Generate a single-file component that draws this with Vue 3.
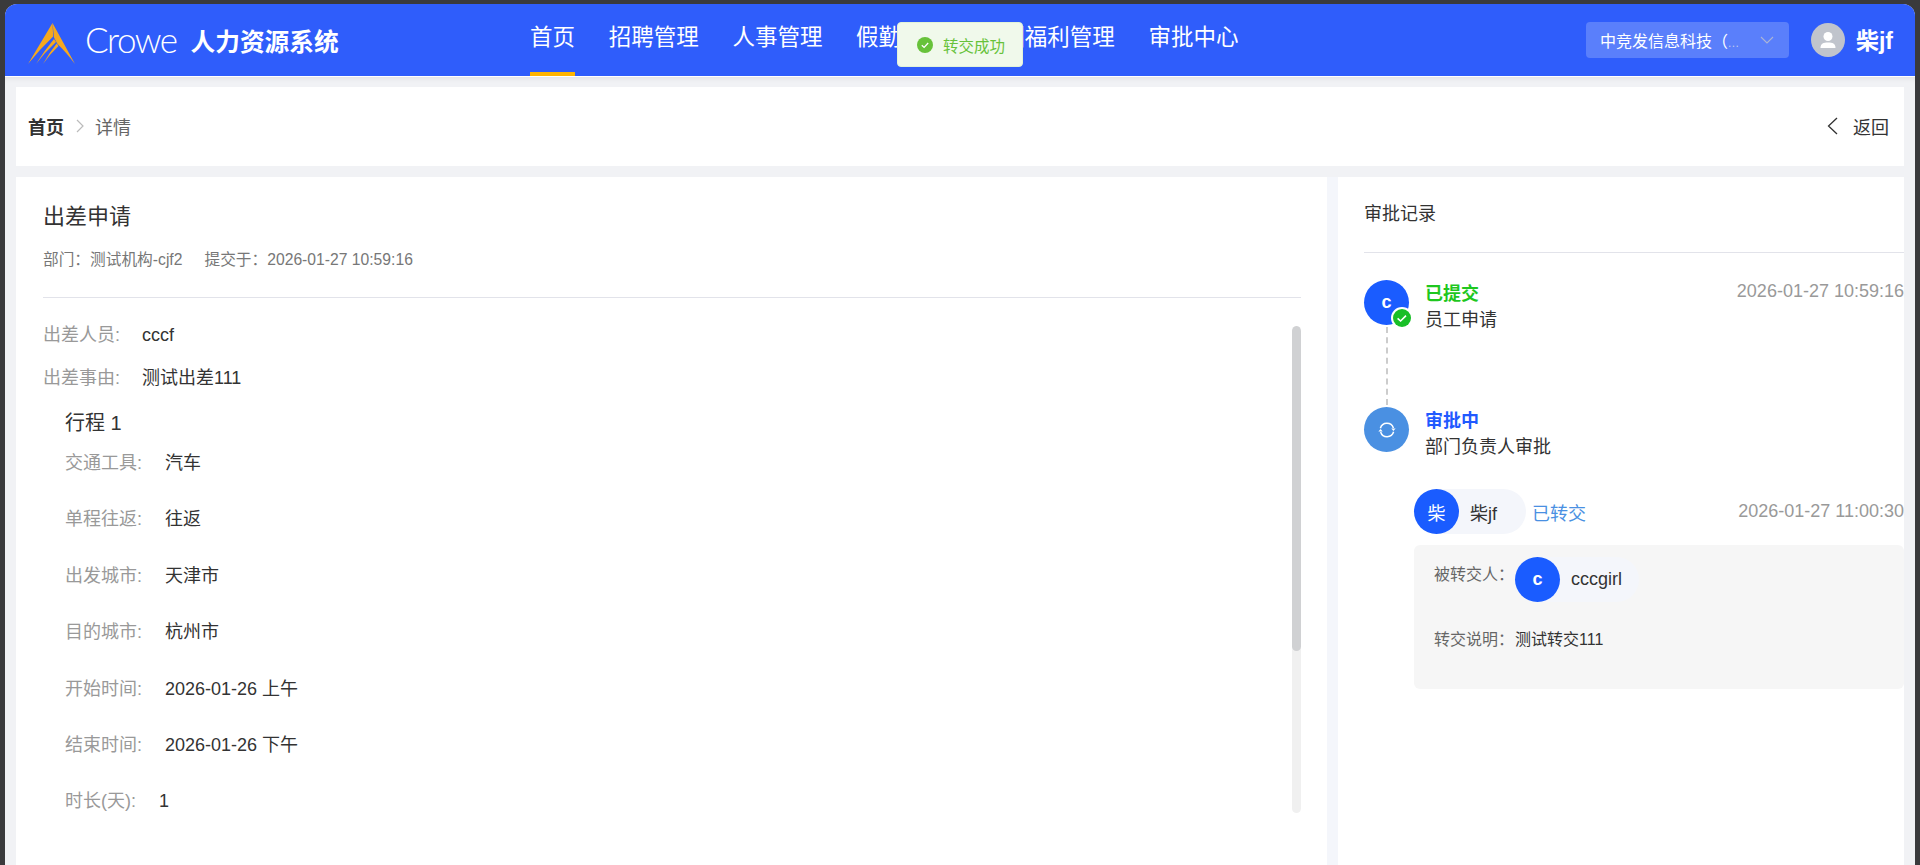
<script setup>
const navItems = ['首页', '招聘管理', '人事管理', '假勤管理', '薪酬福利管理', '审批中心']
const topRows = [
  { label: '出差人员:', value: 'cccf' },
  { label: '出差事由:', value: '测试出差111' }
]
const tripRows = [
  { label: '交通工具:', value: '汽车' },
  { label: '单程往返:', value: '往返' },
  { label: '出发城市:', value: '天津市' },
  { label: '目的城市:', value: '杭州市' },
  { label: '开始时间:', value: '2026-01-26 上午' },
  { label: '结束时间:', value: '2026-01-26 下午' },
  { label: '时长(天):', value: '1', narrow: true }
]
</script>

<template>
  <div class="window">
    <header class="topbar">
      <div class="brand">
        <svg class="logo" viewBox="0 0 47 41" width="47" height="41" aria-hidden="true">
          <path d="M24.5 0 L47 41 Q38 29 29.5 21 L26 14.5 Z" fill="#f5a81f" />
          <path d="M24.5 0 L25.2 13.5 Q12 26 0 41 Z" fill="#f5a81f" />
          <path d="M26 16 L28 19 Q17 29 8 41 Q16 28 26 16 Z" fill="#f5a81f" />
          <path d="M28.7 20.5 L30.5 23 Q22 31 15 41 Q21 30 28.7 20.5 Z" fill="#f5a81f" />
        </svg>
        <span class="crowe">Crowe</span>
        <span class="system">人力资源系统</span>
      </div>
      <nav class="nav">
        <a v-for="(item, i) in navItems" :key="item" class="nav-item" :class="{ active: i === 0 }">{{ item }}</a>
      </nav>
      <div class="top-right">
        <div class="company">
          <span class="company-name">中竞发信息科技（<i class="company-more">...</i></span>
          <svg class="company-arrow" viewBox="0 0 14 8" width="14" height="8" aria-hidden="true">
            <path d="M1 1 L7 7 L13 1" fill="none" stroke="#aab4d6" stroke-width="1.1" />
          </svg>
        </div>
        <div class="user-avatar">
          <svg viewBox="0 0 34 34" width="34" height="34" aria-hidden="true">
            <circle cx="17" cy="13.5" r="4.5" fill="#fff" />
            <path d="M9.5 25 C9.5 20.5 12.5 19.5 17 19.5 C21.5 19.5 24.5 20.5 24.5 25 Z" fill="#fff" />
          </svg>
        </div>
        <span class="user-name">柴jf</span>
      </div>
    </header>

    <div class="toast">
      <svg viewBox="0 0 16 16" width="16" height="16" aria-hidden="true">
        <circle cx="8" cy="8" r="8" fill="#67c23a" />
        <path d="M4.8 8.2 L7.1 10.4 L11.2 6" fill="none" stroke="#fff" stroke-width="1.3" />
      </svg>
      <span>转交成功</span>
    </div>

    <main class="content">
      <div class="crumbs">
        <div class="crumb-path">
          <b class="crumb-home">首页</b>
          <svg viewBox="0 0 8 14" width="8" height="14" aria-hidden="true">
            <path d="M1 1 L7 7 L1 13" fill="none" stroke="#bbbbbb" stroke-width="1.2" />
          </svg>
          <span class="crumb-current">详情</span>
        </div>
        <div class="back">
          <svg viewBox="0 0 11 18" width="11" height="18" aria-hidden="true">
            <path d="M10 1 L1.5 9 L10 17" fill="none" stroke="#333" stroke-width="1.3" />
          </svg>
          <span>返回</span>
        </div>
      </div>

      <div class="panels">
        <section class="detail">
          <h1 class="detail-title">出差申请</h1>
          <div class="meta">
            <span>部门：测试机构-cjf2</span>
            <span>提交于：2026-01-27 10:59:16</span>
          </div>
          <div class="detail-body">
            <div v-for="row in topRows" :key="row.label" class="top-row">
              <span class="label">{{ row.label }}</span>
              <span class="value">{{ row.value }}</span>
            </div>
            <div class="trip">
              <div class="trip-title">行程 1</div>
              <div class="trip-rows">
                <div v-for="row in tripRows" :key="row.label" class="trip-row" :class="{ narrow: row.narrow }">
                  <span class="label">{{ row.label }}</span>
                  <span class="value">{{ row.value }}</span>
                </div>
              </div>
            </div>
            <div class="scroll-track"><div class="scroll-thumb"></div></div>
          </div>
        </section>

        <aside class="records">
          <div class="records-title">审批记录</div>
          <div class="steps">
            <div class="step">
              <div class="step-icon avatar">
                c
                <span class="badge">
                  <svg viewBox="0 0 18 18" width="18" height="18" aria-hidden="true">
                    <circle cx="9" cy="9" r="9" fill="#19bf27" />
                    <path d="M4.6 9.3 L7.6 12 L13 6.6" fill="none" stroke="#fff" stroke-width="1.6" />
                  </svg>
                </span>
              </div>
              <div class="step-text">
                <div class="step-head">
                  <b class="status done">已提交</b>
                  <span class="time">2026-01-27 10:59:16</span>
                </div>
                <div class="step-name">员工申请</div>
              </div>
            </div>
            <div class="connector"></div>
            <div class="step">
              <div class="step-icon sync">
                <svg viewBox="0 0 20 20" width="20" height="20" aria-hidden="true">
                  <path d="M3.4 8.2 A6.8 6.8 0 0 1 16.4 8" fill="none" stroke="#fff" stroke-width="1.5" />
                  <path d="M16.6 11.8 A6.8 6.8 0 0 1 3.6 12" fill="none" stroke="#fff" stroke-width="1.5" />
                  <path d="M14.3 8.6 L18.6 8.6 L16.4 11 Z" fill="#fff" />
                  <path d="M1.4 11.4 L5.7 11.4 L3.6 9 Z" fill="#fff" />
                </svg>
              </div>
              <div class="step-text">
                <div class="step-head">
                  <b class="status pending">审批中</b>
                </div>
                <div class="step-name">部门负责人审批</div>
              </div>
            </div>
          </div>

          <div class="transfer">
            <div class="transfer-head">
              <div class="pill pill-self">
                <span class="pill-avatar">柴</span>
                <span class="pill-name">柴jf</span>
              </div>
              <span class="transfer-state">已转交</span>
              <span class="time">2026-01-27 11:00:30</span>
            </div>
            <div class="transfer-box">
              <div class="box-row box-person">
                <span class="box-label">被转交人：</span>
                <div class="pill pill-target">
                  <span class="pill-avatar latin">c</span>
                  <span class="pill-name">cccgirl</span>
                </div>
              </div>
              <div class="box-row box-note">
                <span class="box-label">转交说明：</span>
                <span class="box-value">测试转交111</span>
              </div>
            </div>
          </div>
        </aside>
      </div>
    </main>
  </div>
</template>

<style>
html, body {
  margin: 0;
  background: #3a3a3c;
  overflow: hidden;
}
</style>

<style scoped>
.window {
  position: relative;
  box-sizing: border-box;
  height: 861px;
  margin: 4px 5px 0;
  display: flex;
  flex-direction: column;
  overflow: hidden;
  border-radius: 12px 12px 0 0;
  background: #f1f2f5;
  color: #333;
  font-family: "Liberation Sans", "Noto Sans CJK SC", sans-serif;
}

.topbar {
  flex: none;
  height: 72px;
  display: flex;
  align-items: stretch;
  padding: 0 22px 0 23px;
  background: #2f5dfb;
  border-bottom: 1px solid #fff;
  color: #fff;
}
.brand {
  width: 502px;
  display: flex;
  align-items: center;
}
.logo { flex: none; margin-top: 7px; }
.crowe {
  margin-left: 10px;
  margin-top: -2px;
  font-family: Lato, sans-serif;
  font-weight: 300;
  font-size: 35px;
  letter-spacing: -1.5px;
  line-height: 1;
}
.system {
  margin-left: 14px;
  font-size: 24.7px;
  font-weight: 700;
}
.nav {
  display: flex;
  gap: 33.7px;
}
.nav-item {
  box-sizing: border-box;
  height: 72px;
  padding-top: 16px;
  font-size: 22.5px;
  line-height: 36px;
  white-space: nowrap;
  border-bottom: 4px solid transparent;
}
.nav-item.active { border-bottom-color: #ffb400; }

.top-right {
  margin-left: auto;
  display: flex;
  align-items: center;
}
.company {
  box-sizing: border-box;
  width: 203px;
  height: 36px;
  padding: 0 14px;
  display: flex;
  align-items: center;
  justify-content: space-between;
  border-radius: 4px;
  background: #5a7ffb;
  font-size: 16px;
}
.company-name {
  width: 146px;
  white-space: nowrap;
}
.company-more {
  font-style: normal;
  font-size: 12px;
  letter-spacing: 0.5px;
  color: #bcc8ee;
}
.company-arrow { margin-right: 1px; }
.user-avatar {
  width: 34px;
  height: 34px;
  margin-left: 22px;
  border-radius: 50%;
  background: #c0c4cc;
}
.user-avatar svg { display: block; }
.user-name {
  margin-left: 11px;
  margin-top: -2px;
  font-size: 23px;
  font-weight: 700;
}

.toast {
  position: absolute;
  left: 892px;
  top: 18px;
  box-sizing: border-box;
  width: 126px;
  height: 45px;
  padding-left: 19px;
  display: flex;
  align-items: center;
  gap: 10px;
  border: 1px solid #e1f3d8;
  border-radius: 4px;
  background: #f0f9eb;
  color: #67c23a;
  font-size: 15.5px;
}

.content {
  flex: 1;
  min-height: 0;
  display: flex;
  flex-direction: column;
  gap: 11px;
  padding: 10px 11px 0;
  box-shadow: inset 0 6px 6px -5px rgba(0, 0, 0, 0.08);
}

.crumbs {
  flex: none;
  box-sizing: border-box;
  height: 79px;
  display: flex;
  align-items: center;
  justify-content: space-between;
  padding: 0 15px 2px 12px;
  background: #fff;
  font-size: 18px;
}
.crumb-path { display: flex; align-items: center; }
.crumb-home { font-weight: 700; color: #333; }
.crumb-path svg { margin: 0 11px 0 12px; }
.crumb-current { color: #666; }
.back { display: flex; align-items: center; gap: 15px; color: #333; }

.panels {
  flex: 1;
  min-height: 0;
  display: flex;
}

.detail {
  box-sizing: border-box;
  width: 1322px;
  flex: none;
  padding: 0 26px 0 27px;
  background: #fff;
  border-right: 11px solid #f4f6fb;
  display: flex;
  flex-direction: column;
}
.detail-title {
  margin: 0;
  padding-top: 24px;
  font-size: 22px;
  font-weight: 400;
  line-height: 32px;
  color: #333;
}
.meta {
  margin-top: 15px;
  padding-bottom: 25px;
  display: flex;
  gap: 22px;
  font-size: 15.7px;
  line-height: 24px;
  color: #777;
  border-bottom: 1px solid #e2e3ea;
}
.detail-body {
  position: relative;
  flex: 1;
  padding-top: 16px;
  font-size: 18px;
}
.top-row {
  height: 43px;
  line-height: 43px;
  display: flex;
}
.label { color: #999; }
.value { color: #333; }
.top-row .label { width: 99px; }
.trip { padding-left: 22px; }
.trip-title {
  height: 45px;
  line-height: 46px;
  font-size: 20px;
  color: #333;
}
.trip-rows {
  display: flex;
  flex-direction: column;
  gap: 32.4px;
  padding-top: 6px;
}
.trip-row {
  height: 24px;
  line-height: 24px;
  display: flex;
}
.trip-row .label { width: 100px; }
.trip-row.narrow .label { width: 94px; }

.scroll-track {
  position: absolute;
  right: 0;
  top: 28px;
  width: 9px;
  height: 487px;
  border-radius: 5px;
  background: #f0f0f0;
  overflow: hidden;
}
.scroll-thumb {
  height: 325px;
  border-radius: 5px;
  background: #d0d1d3;
}

.records {
  flex: 1;
  min-width: 0;
  box-sizing: border-box;
  padding-left: 26px;
  background: #fff;
}
.records-title {
  height: 76px;
  line-height: 74px;
  font-size: 18px;
  color: #333;
  border-bottom: 1px solid #e2e3ea;
  box-sizing: border-box;
}
.steps { padding-top: 27px; }
.step {
  display: flex;
  gap: 16px;
  height: 45px;
}
.step-icon {
  position: relative;
  flex: none;
  width: 45px;
  height: 45px;
  border-radius: 50%;
  display: flex;
  align-items: center;
  justify-content: center;
  color: #fff;
}
.avatar {
  background: #1a5cff;
  font-size: 18px;
  font-weight: 700;
}
.sync { background: #4a90e2; }
.badge {
  position: absolute;
  right: -4px;
  bottom: -4px;
  width: 18px;
  height: 18px;
  border: 2px solid #fff;
  border-radius: 50%;
  background: #fff;
  display: flex;
}
.step-text { flex: 1; min-width: 0; }
.step-head {
  display: flex;
  justify-content: space-between;
  align-items: center;
  height: 27px;
  margin-top: -2px;
  font-size: 18px;
}
.status { font-weight: 700; }
.done { color: #1fc71f; }
.pending { color: #2159ff; }
.time {
  font-size: 18px;
  color: #999;
  white-space: nowrap;
}
.step-name {
  height: 27px;
  line-height: 27px;
  margin-top: 2px;
  font-size: 18px;
  color: #333;
}
.connector {
  width: 0;
  height: 78px;
  margin: 2px 0 2px 22px;
  border-left: 2px dashed #cccccc;
}

.transfer {
  margin-top: 37px;
  margin-left: 50px;
}
.transfer-head {
  display: flex;
  align-items: center;
  height: 45px;
  font-size: 18px;
}
.transfer-head .time { margin-left: auto; }
.pill {
  display: flex;
  align-items: center;
  height: 45px;
  border-radius: 23px;
  background: #f4f6fb;
}
.pill-self { width: 112px; }
.pill-target { width: 124px; }
.pill-avatar {
  flex: none;
  width: 45px;
  height: 45px;
  border-radius: 50%;
  background: #1a5cff;
  color: #fff;
  font-size: 18px;
  display: flex;
  align-items: center;
  justify-content: center;
}
.pill-avatar.latin { font-weight: 700; }
.pill-name {
  margin-left: 11px;
  font-size: 18px;
  color: #333;
}
.transfer-state {
  margin-left: 6px;
  color: #4a90e2;
}
.transfer-box {
  box-sizing: border-box;
  height: 144px;
  margin-top: 11px;
  padding: 12px 20px 0;
  border-radius: 6px;
  background: #f6f6f6;
  font-size: 16px;
}
.box-row { display: flex; }
.box-person { height: 45px; }
.box-note {
  margin-top: 26px;
  line-height: 24px;
}
.box-label {
  width: 81px;
  flex: none;
  color: #666;
  white-space: nowrap;
  line-height: 24px;
  padding-top: 6px;
  height: 24px;
}
.box-note .box-label { padding-top: 0; }
.box-value { color: #333; }
</style>
